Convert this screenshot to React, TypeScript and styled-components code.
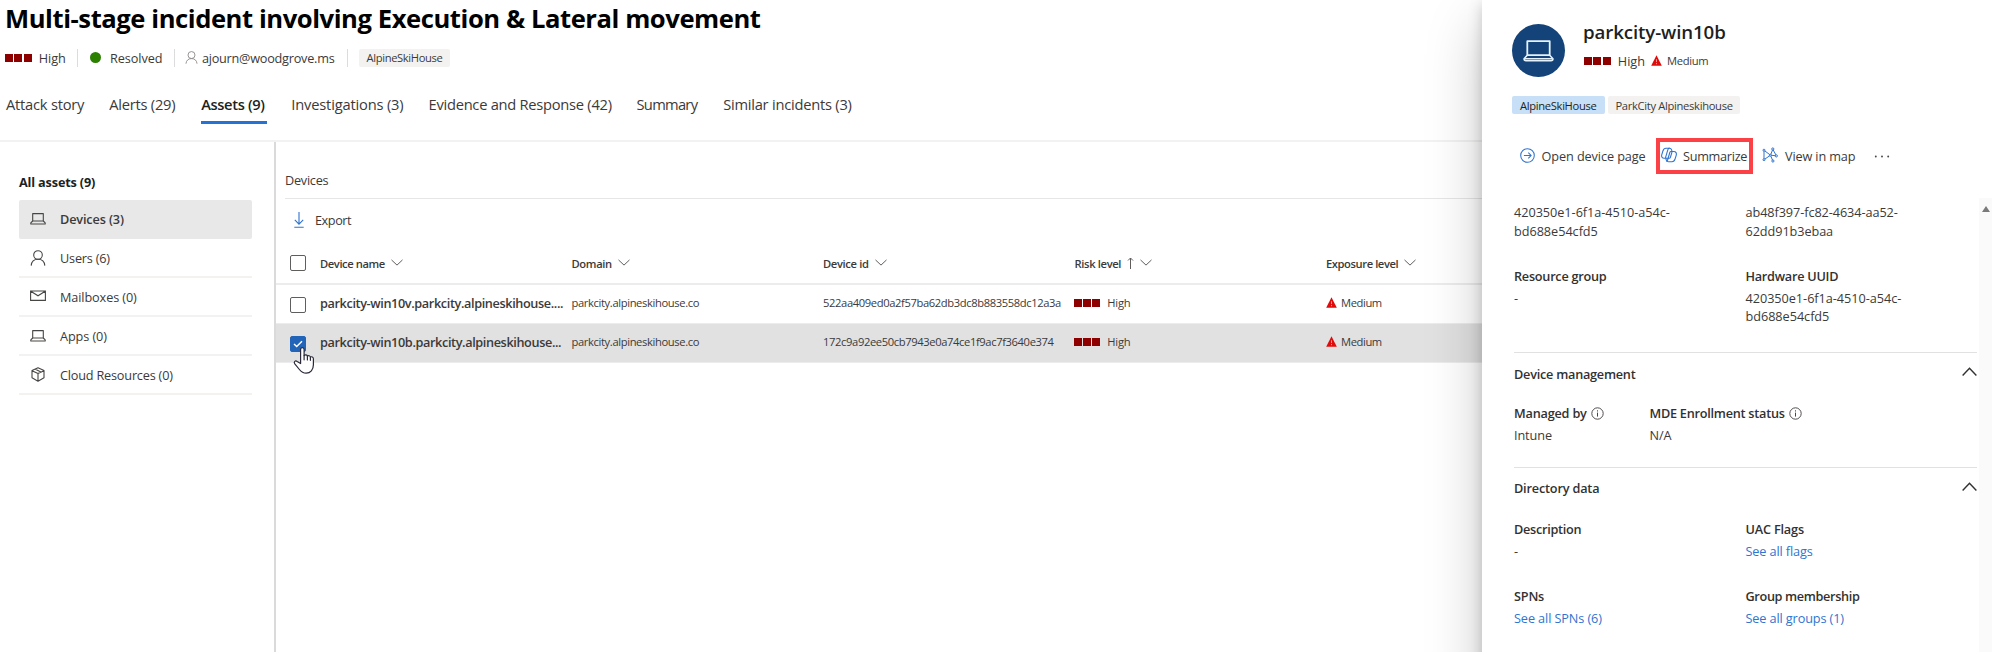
import React from 'react';
import styled, { createGlobalStyle, css } from 'styled-components';

const GlobalStyle = createGlobalStyle`
  * { box-sizing: border-box; }
  body {
    margin: 0;
    background: #fff;
    color: #3b3a39;
    font-family: 'Open Sans', 'Noto Sans', sans-serif;
    font-size: 12.7px;
    overflow: hidden;
  }
`;

type TextProps = { $ls?: number; $size?: number; $weight?: number; $color?: string };

const Text = styled.span<TextProps>`
  white-space: nowrap;
  letter-spacing: ${p => p.$ls ?? -0.2}px;
  ${p => p.$size && css`font-size: ${p.$size}px;`}
  ${p => p.$weight && css`font-weight: ${p.$weight};`}
  ${p => p.$color && css`color: ${p.$color};`}
`;

const Page = styled.div`
  display: grid;
  grid-template-columns: 1482px 518px;
  width: 2000px;
  height: 652px;
  overflow: hidden;
`;

/* ---------- incident header ---------- */

const Main = styled.main`
  display: flex;
  flex-direction: column;
  min-width: 0;
`;

const Title = styled.h1`
  margin: 0;
  padding: 0 0 0 5px;
  height: 37px;
  line-height: 37px;
  font-size: 25.6px;
  font-weight: 700;
  letter-spacing: -0.43px;
  color: #000;
  white-space: nowrap;
`;

const MetaRow = styled.div`
  display: flex;
  align-items: center;
  height: 41px;
  padding-left: 6px;
`;

const MetaItem = styled.div<{ $gap: number }>`
  display: flex;
  align-items: center;
  gap: ${p => p.$gap}px;
`;

const Separator = styled.span<{ $left: number; $right: number }>`
  width: 1px;
  height: 18px;
  margin: 0 ${p => p.$right}px 0 ${p => p.$left}px;
  background: #dcdcdc;
`;

const Dot = styled.span`
  width: 11px;
  height: 11px;
  border-radius: 50%;
  background: #2b8000;
`;

const Chip = styled.span<{ $active?: boolean; $width: number }>`
  display: flex;
  align-items: center;
  justify-content: center;
  width: ${p => p.$width}px;
  height: 18px;
  border-radius: 2px;
  font-size: 11.2px;
  background: ${p => (p.$active ? '#c7e0f7' : '#f3f2f1')};
  color: ${p => (p.$active ? '#201f1e' : '#3b3a39')};
`;

const Tabs = styled.nav`
  display: flex;
  align-items: flex-start;
  gap: 24.6px;
  height: 64px;
  padding: 9px 0 0 6px;
  border-bottom: 2px solid #f3f2f1;
  font-size: 14.7px;
`;

const Tab = styled.div<{ $active?: boolean; $width: number }>`
  width: ${p => p.$width}px;
  height: 37px;
  line-height: 34px;
  ${p => p.$active && css`
    font-weight: 600;
    color: #201f1e;
    border-bottom: 3px solid #2472d3;
  `}
`;

/* ---------- asset navigation ---------- */

const Body = styled.div`
  display: flex;
  flex: 1;
  min-height: 0;
`;

const Sidebar = styled.aside`
  width: 276px;
  padding: 31px 22px 0 19px;
  border-right: 2px solid #dadada;
`;

const SidebarTitle = styled.div`
  height: 27px;
  line-height: 19px;
  padding-left: 0;
  font-weight: 700;
  color: #201f1e;
`;

const NavItem = styled.div<{ $active?: boolean }>`
  display: flex;
  align-items: center;
  gap: 14px;
  height: ${p => (p.$active ? 39 : 39.1)}px;
  padding: 0 0 ${p => (p.$active ? 1 : 0)}px 11px;
  border-radius: ${p => (p.$active ? '2px' : 0)};
  border-bottom: ${p => (p.$active ? 'none' : '2px solid #f3f2f1')};
  background: ${p => (p.$active ? '#e8e8e8' : 'transparent')};
  font-weight: ${p => (p.$active ? 600 : 400)};
`;

/* ---------- device table ---------- */

const Content = styled.section`
  flex: 1;
  min-width: 0;
`;

const ContentTitle = styled.div`
  height: 57px;
  margin-left: 9px;
  padding-top: 29px;
  border-bottom: 1px solid #e6e6e6;
  line-height: 19px;
`;

const ExportButton = styled.div`
  display: flex;
  align-items: center;
  gap: 10px;
  height: 41px;
  padding-left: 17px;
`;

const Row = styled.div<{ $selected?: boolean; $header?: boolean }>`
  display: grid;
  grid-template-columns: 44px repeat(5, 251.5px);
  align-items: center;
  height: ${p => (p.$header ? 45 : 39.2)}px;
  padding-top: ${p => (p.$header ? 3 : 0)}px;
  border-bottom: ${p => (p.$header ? 2 : 1)}px solid #ececec;
  background: ${p => (p.$selected ? '#e1e1e1' : 'transparent')};
  font-size: 11.2px;
  font-weight: ${p => (p.$header ? 600 : 400)};
`;

const CheckCell = styled.div<{ $top?: number }>`
  padding: ${p => p.$top ?? 0}px 0 0 14px;
  display: flex;
`;

const Box = styled.span<{ $checked?: boolean }>`
  position: relative;
  display: flex;
  align-items: center;
  justify-content: center;
  width: 16px;
  height: 16px;
  border-radius: 2px;
  border: 1px solid ${p => (p.$checked ? '#2264b8' : '#605e5c')};
  background: ${p => (p.$checked ? '#2264b8' : '#fff')};
`;

const Pointer = styled.span`
  position: absolute;
  left: 1px;
  top: 9px;
  line-height: 0;
  z-index: 2;
`;

const Cell = styled.div<{ $gap?: number; $raise?: boolean }>`
  display: flex;
  align-items: center;
  gap: ${p => p.$gap ?? 6}px;
  padding-bottom: ${p => (p.$raise ? 3 : 0)}px;
`;

const Squares = styled.span`
  display: flex;
  gap: 1.4px;
  margin-left: -1px;
  i {
    width: 8px;
    height: 8px;
    background: #8e0000;
  }
`;

/* ---------- details panel ---------- */

const Panel = styled.aside`
  position: relative;
  height: 720px;
  background: #fff;
  box-shadow: 0 24px 53px rgba(0, 0, 0, 0.22), 0 4px 13px rgba(0, 0, 0, 0.18);
`;

const PanelHeader = styled.div`
  display: flex;
  gap: 18px;
  height: 96px;
  padding: 24px 0 0 30px;
`;

const Avatar = styled.div`
  display: flex;
  align-items: center;
  justify-content: center;
  width: 53px;
  height: 53px;
  border-radius: 50%;
  background: #134379;
`;

const PanelTitle = styled.h2`
  margin: -5px 0 0;
  height: 32px;
  line-height: 26px;
  font-size: 18.7px;
  font-weight: 600;
  letter-spacing: -0.12px;
  color: #201f1e;
`;

const PanelMeta = styled.div`
  display: flex;
  align-items: center;
  height: 19px;
  padding-left: 2px;
  gap: 5.5px;
  span:nth-of-type(2) { margin-left: 1.5px; }
`;

const Chips = styled.div`
  display: flex;
  gap: 3.5px;
  height: 42px;
  padding-left: 30px;
`;

const Actions = styled.div`
  display: flex;
  align-items: center;
  height: 36px;
  padding-left: 38px;
`;

const Action = styled.div<{ $gap: number; $width: number; $pad?: number; $highlight?: boolean }>`
  display: flex;
  align-items: center;
  gap: ${p => p.$gap}px;
  width: ${p => p.$width}px;
  height: 36px;
  padding-left: ${p => p.$pad ?? 0}px;
  ${p => p.$highlight && css`border: 4px solid #fb4145;`}
  svg { flex: none; margin-top: -2px; }
`;

const Scroller = styled.div`
  display: flex;
  margin-top: 24px;
  height: 522px;
`;

const Details = styled.div`
  width: 497px;
  padding: 5px 2px 0 32px;
  line-height: 18.7px;
`;

const Track = styled.div`
  width: 13px;
  background: #fafafa;
  padding: 8px 0 0 2.5px;
  line-height: 0;
`;

const Fields = styled.dl<{ $first: number; $height: number }>`
  display: grid;
  grid-template-columns: ${p => p.$first}px 1fr;
  height: ${p => p.$height}px;
  margin: 0;
`;

const Field = styled.div`
  dt {
    display: flex;
    align-items: center;
    gap: 4px;
    height: 18.7px;
    margin-bottom: 3.4px;
    font-weight: 600;
    color: #323130;
  }
  dd { margin: 0; }
`;

const Line = styled.div``;

const SectionHead = styled.div<{ $height: number }>`
  display: flex;
  justify-content: space-between;
  height: ${p => p.$height}px;
  padding: 11.5px 0 0;
  border-top: 1px solid #e1e1e1;
  font-weight: 600;
  color: #323130;
  svg { margin-top: 2.5px; }
`;

const BLUE = '#2f74d0';

/* ---------- icons ---------- */

const Laptop = () => (
  <svg width="16" height="16" viewBox="0 0 16 16" fill="none" stroke="#484644" strokeWidth="1.1" strokeLinejoin="round">
    <path d="M2.700 2.600h10.600v7.400H2.700z" />
    <path d="M2.700 10 .8 11.900v1.100h14.400v-1.100L13.300 10" />
  </svg>
);

const LargeLaptop = () => (
  <svg width="31" height="22" viewBox="0 0 31 22" fill="none" stroke="#e4f2fd" strokeWidth="1.800" strokeLinejoin="round">
    <path d="M4.300 1.200h22.400v14H4.300z" />
    <path d="M4.300 15.200 1 18.700c0 1.300.7 2 2 2h25c1.300 0 2-.7 2-2l-3.300-3.500M1.500 18.700h28" strokeWidth="1.500" />
  </svg>
);

const Person = ({ size = 16, color = '#484644' }: { size?: number; color?: string }) => (
  <svg width={size} height={size} viewBox="0 0 16 16" fill="none" stroke={color} strokeWidth="1.100">
    <circle cx="8" cy="5" r="4.300" />
    <path d="M1.200 15.600C1.500 11.800 4 9.300 8 9.300s6.500 2.500 6.800 6.300" />
  </svg>
);

const Mail = () => (
  <svg width="16" height="16" viewBox="0 0 16 16" fill="none" stroke="#484644" strokeWidth="1.100">
    <path d="M.6 2h14.800v9.400H.6zM.8 2.200 8 6.800l7.200-4.600" />
  </svg>
);

const Cube = () => (
  <svg width="16" height="16" viewBox="0 0 16 16" fill="none" stroke="#484644" strokeWidth="1.100" strokeLinejoin="round">
    <path d="M8 .8 14 3.400v7.400L8 14.200 2 10.800V3.400zM2 3.700l6 2.900 6-2.900M8 6.600v7.600M4.900 2.100l6 2.900" />
  </svg>
);

const Chevron = ({ width = 12, up = false }: { width?: number; up?: boolean }) => (
  <svg width={width} height={width * 0.62} viewBox="0 0 12 7.400" fill="none" stroke={up ? '#323130' : '#605e5c'} strokeWidth={up ? 1.150 : 1}>
    <path d={up ? 'M.5 6.700 6 1l5.500 5.700' : 'M.5 .9 6 6.100 11.500 .9'} />
  </svg>
);

const SortArrow = () => (
  <svg width="7" height="12" viewBox="0 0 7 12" fill="none" stroke="#605e5c">
    <path d="M3.500 12V1M1 3.500 3.500 1 6 3.500" />
  </svg>
);

const Warning = () => (
  <svg width="11" height="11" viewBox="0 0 11 11">
    <path d="M5.500 .3 10.800 10.700H.2z" fill="#e00b0b" />
    <path d="M5.500 4.300v2.800M5.500 8v1.200" stroke="#f7a3a3" strokeWidth=".9" />
  </svg>
);

const Download = () => (
  <svg width="12" height="16" viewBox="0 0 12 16" fill="none" stroke={BLUE} strokeWidth="1.100">
    <path d="M6 0v12M1.800 7.900 6 12.100l4.200-4.200M1.300 15.300h9.400" />
  </svg>
);

const Check = () => (
  <svg width="10" height="8" viewBox="0 0 10 8" fill="none" stroke="#fff" strokeWidth="1.400">
    <path d="M1 3.900 3.700 6.600 9 1.300" />
  </svg>
);

const Hand = () => (
  <svg width="24" height="29" viewBox="0 0 24 29" fill="#fff" stroke="#2b2a3a" strokeWidth="1.200" strokeLinejoin="round" strokeLinecap="round">
    <path d="M8.600 17.500V3.600c0-2.600 3.500-2.600 3.500 0v6c1-1.300 3-1 3.300.6 1-1 2.700-.6 3 .9 1.200-.8 3-.2 3 1.700v6c0 5-3 8.400-7.200 8.400-3.400 0-5-1.400-6.800-3.700L2.800 17.800c-1.500-2 .6-3.700 2.400-2.400z" />
    <path d="M12.100 9.600v4.200M15.400 10.200v3.700M18.400 11.300v3" fill="none" />
  </svg>
);

const OpenCircle = () => (
  <svg width="15" height="15" viewBox="0 0 15 15" fill="none" stroke={BLUE} strokeWidth="1.050">
    <circle cx="7.500" cy="7.500" r="6.800" />
    <path d="M3.900 7.500h7M8.300 4.700l2.800 2.800-2.800 2.800" />
  </svg>
);

const Copilot = () => (
  <svg width="16" height="16" viewBox="0 0 16 16" fill="none" stroke={BLUE} strokeWidth="1.100" strokeLinejoin="round">
    <path d="M4.300 11.300H3.200C1.100 11.300.2 9.700.8 7.600L1.900 4C2.500 2 3.500 1.200 5 1.200h3.600c1.100 0 1.600.5 1.900 1.400l.6 2" />
    <path d="M8.600 1.200c-1 0-1.500.7-1.800 1.700L4.600 10.400c-.1.600.3 1.700.6 2.500.4 1.300 1 1.900 2.200 1.900H11c1.500 0 2.500-.8 3.100-2.800l1.100-3.600c.6-2.100-.3-3.800-2.400-3.800H9.900c-.6 0-.9.4-1.100 1l-2.200 7.500c-.3 1-.7 1.500-1.300 1.500" transform="translate(0 -.1)" />
    <path d="M11.100 4.600 9.400 10.300c-.2.700-.6 1-1.300 1H4.700" />
  </svg>
);

const MapIcon = () => (
  <svg width="16" height="16" viewBox="0 0 16 16" fill="none" stroke={BLUE} strokeWidth="1">
    <path d="M2 3.300v9.400M2 3.300l6.500 4.900L2 12.700M8.500 8.200l2.300-6M8.500 8.200l5.700.6M8.500 8.200l2.300 5.700M10.800 2.300l3.600 6.500" />
    <g fill="#fff">
      <circle cx="2" cy="3.200" r="1" />
      <circle cx="2" cy="12.700" r="1" />
      <circle cx="10.800" cy="2" r="1.100" />
      <circle cx="14.300" cy="8.900" r="1.100" />
      <circle cx="10.900" cy="14" r="1.100" />
      <circle cx="8.300" cy="8.200" r="1" />
    </g>
  </svg>
);

const Dots = () => (
  <svg width="16" height="3" viewBox="0 0 16 3" fill="#484644">
    <circle cx="1.800" cy="1.500" r=".95" />
    <circle cx="8" cy="1.500" r=".95" />
    <circle cx="14.200" cy="1.500" r=".95" />
  </svg>
);

const Info = () => (
  <svg width="13" height="13" viewBox="0 0 13 13" fill="none" stroke="#484644">
    <circle cx="6.500" cy="6.500" r="5.700" strokeWidth=".95" />
    <path d="M6.500 5.600v4M6.500 3.300v1.200" />
  </svg>
);

const RiskSquares = () => (
  <Squares>
    <i />
    <i />
    <i />
  </Squares>
);

/* ---------- data ---------- */

const tabs = [
  { label: 'Attack story', ls: -0.23, width: 78.6 },
  { label: 'Alerts (29)', ls: -0.24, width: 67.4 },
  { label: 'Assets (9)', ls: -0.36, width: 65.6, active: true },
  { label: 'Investigations (3)', ls: -0.19, width: 112.6 },
  { label: 'Evidence and Response (42)', ls: -0.27, width: 183.4 },
  { label: 'Summary', ls: -0.72, width: 62 },
  { label: 'Similar incidents (3)', ls: -0.24, width: 129 },
];

const assets = [
  { label: 'Devices (3)', icon: <Laptop />, ls: -0.14, active: true },
  { label: 'Users (6)', icon: <Person />, ls: -0.2 },
  { label: 'Mailboxes (0)', icon: <Mail />, ls: -0.11 },
  { label: 'Apps (0)', icon: <Laptop />, ls: -0.1 },
  { label: 'Cloud Resources (0)', icon: <Cube />, ls: -0.2 },
];

const columns = [
  { label: 'Device name', ls: -0.41 },
  { label: 'Domain', ls: -0.35 },
  { label: 'Device id', ls: -0.35 },
  { label: 'Risk level', ls: -0.35, sorted: true },
  { label: 'Exposure level', ls: -0.42 },
];

const devices = [
  { name: 'parkcity-win10v.parkcity.alpineskihouse....', id: '522aa409ed0a2f57ba62db3dc8b883558dc12a3a', selected: false },
  { name: 'parkcity-win10b.parkcity.alpineskihouse...', id: '172c9a92ee50cb7943e0a74ce1f9ac7f3640e374', selected: true },
];

export default function App() {
  return (
    <Page>
      <GlobalStyle />
      <Main>
        <Title>Multi-stage incident involving Execution &amp; Lateral movement</Title>
        <MetaRow>
          <MetaItem $gap={7}>
            <RiskSquares />
            <Text $ls={-0.1}>High</Text>
          </MetaItem>
          <Separator $left={11.5} $right={12} />
          <MetaItem $gap={9}>
            <Dot />
            <Text $ls={-0.1}>Resolved</Text>
          </MetaItem>
          <Separator $left={11.5} $right={10} />
          <MetaItem $gap={4}>
            <Person size={13} color="#8a8886" />
            <Text $ls={-0.24}>ajourn@woodgrove.ms</Text>
          </MetaItem>
          <Separator $left={13} $right={10.5} />
          <Chip $width={91}>
            <Text $ls={-0.37}>AlpineSkiHouse</Text>
          </Chip>
        </MetaRow>
        <Tabs>
          {tabs.map(t => (
            <Tab key={t.label} $active={t.active} $width={t.width}>
              <Text $ls={t.ls}>{t.label}</Text>
            </Tab>
          ))}
        </Tabs>
        <Body>
          <Sidebar>
            <SidebarTitle>
              <Text $ls={-0.17}>All assets (9)</Text>
            </SidebarTitle>
            {assets.map(a => (
              <NavItem key={a.label} $active={a.active}>
                {a.icon}
                <Text $ls={a.ls}>{a.label}</Text>
              </NavItem>
            ))}
          </Sidebar>
          <Content>
            <ContentTitle>
              <Text $ls={-0.25}>Devices</Text>
            </ContentTitle>
            <ExportButton>
              <Download />
              <Text $ls={-0.44}>Export</Text>
            </ExportButton>
            <Row $header>
              <CheckCell>
                <Box />
              </CheckCell>
              {columns.map(c => (
                <Cell key={c.label}>
                  <Text $ls={c.ls}>{c.label}</Text>
                  {c.sorted && <SortArrow />}
                  <Chevron />
                </Cell>
              ))}
            </Row>
            {devices.map(d => (
              <Row key={d.id} $selected={d.selected}>
                <CheckCell $top={1}>
                  <Box $checked={d.selected}>
                    {d.selected && (
                      <>
                        <Check />
                        <Pointer>
                          <Hand />
                        </Pointer>
                      </>
                    )}
                  </Box>
                </CheckCell>
                <Cell $raise>
                  <Text $size={12.7} $weight={600} $ls={-0.38}>{d.name}</Text>
                </Cell>
                <Cell $raise>
                  <Text $ls={-0.37}>parkcity.alpineskihouse.co</Text>
                </Cell>
                <Cell $raise>
                  <Text $ls={-0.38}>{d.id}</Text>
                </Cell>
                <Cell $gap={7} $raise>
                  <RiskSquares />
                  <Text $ls={-0.2}>High</Text>
                </Cell>
                <Cell $gap={4} $raise>
                  <Warning />
                  <Text $ls={-0.4}>Medium</Text>
                </Cell>
              </Row>
            ))}
          </Content>
        </Body>
      </Main>

      <Panel>
        <PanelHeader>
          <Avatar>
            <LargeLaptop />
          </Avatar>
          <div>
            <PanelTitle>parkcity-win10b</PanelTitle>
            <PanelMeta>
              <RiskSquares />
              <Text $ls={0}>High</Text>
              <Warning />
              <Text $size={11.2} $ls={-0.35}>Medium</Text>
            </PanelMeta>
          </div>
        </PanelHeader>
        <Chips>
          <Chip $active $width={92.5}>
            <Text $ls={-0.33}>AlpineSkiHouse</Text>
          </Chip>
          <Chip $width={132}>
            <Text $ls={-0.32}>ParkCity Alpineskihouse</Text>
          </Chip>
        </Chips>
        <Actions>
          <Action $gap={6.5} $width={136}>
            <OpenCircle />
            <Text $ls={-0.09}>Open device page</Text>
          </Action>
          <Action $highlight $gap={6} $width={97} $pad={1}>
            <Copilot />
            <Text $ls={-0.29}>Summarize</Text>
          </Action>
          <Action $gap={7} $width={121} $pad={9}>
            <MapIcon />
            <Text $ls={-0.13}>View in map</Text>
          </Action>
          <Dots />
        </Actions>
        <Scroller>
          <Details>
            <Fields $first={231.5} $height={63.5}>
              <Text as="div" $ls={-0.04}>
                <Line>420350e1-6f1a-4510-a54c-</Line>
                <Line>bd688e54cfd5</Line>
              </Text>
              <Text as="div" $ls={-0.08}>
                <Line>ab48f397-fc82-4634-aa52-</Line>
                <Line>62dd91b3ebaa</Line>
              </Text>
            </Fields>
            <Fields $first={231.5} $height={85.5}>
              <Field>
                <dt><Text $ls={-0.25}>Resource group</Text></dt>
                <dd>-</dd>
              </Field>
              <Field>
                <dt><Text $ls={-0.26}>Hardware UUID</Text></dt>
                <Text as="dd" $ls={-0.04}>
                  <Line>420350e1-6f1a-4510-a54c-</Line>
                  <Line>bd688e54cfd5</Line>
                </Text>
              </Field>
            </Fields>
            <SectionHead $height={52}>
              <Text $ls={-0.24}>Device management</Text>
              <Chevron up width={15} />
            </SectionHead>
            <Fields $first={135.5} $height={62.5}>
              <Field>
                <dt><Text $ls={-0.2}>Managed by</Text><Info /></dt>
                <dd><Text $ls={-0.1}>Intune</Text></dd>
              </Field>
              <Field>
                <dt><Text $ls={-0.25}>MDE Enrollment status</Text><Info /></dt>
                <dd><Text $ls={-0.1}>N/A</Text></dd>
              </Field>
            </Fields>
            <SectionHead $height={53.5}>
              <Text $ls={-0.18}>Directory data</Text>
              <Chevron up width={15} />
            </SectionHead>
            <Fields $first={231.5} $height={67}>
              <Field>
                <dt><Text $ls={-0.28}>Description</Text></dt>
                <dd>-</dd>
              </Field>
              <Field>
                <dt><Text $ls={-0.18}>UAC Flags</Text></dt>
                <dd><Text $color={BLUE} $ls={-0.11}>See all flags</Text></dd>
              </Field>
            </Fields>
            <Fields $first={231.5} $height={60}>
              <Field>
                <dt><Text $ls={-0.2}>SPNs</Text></dt>
                <dd><Text $color={BLUE} $ls={-0.1}>See all SPNs (6)</Text></dd>
              </Field>
              <Field>
                <dt><Text $ls={-0.35}>Group membership</Text></dt>
                <dd><Text $color={BLUE} $ls={-0.12}>See all groups (1)</Text></dd>
              </Field>
            </Fields>
          </Details>
          <Track>
            <svg width="8" height="6" viewBox="0 0 8 6">
              <path d="M4 0 8 6H0z" fill="#7a7a7a" />
            </svg>
          </Track>
        </Scroller>
      </Panel>
    </Page>
  );
}
